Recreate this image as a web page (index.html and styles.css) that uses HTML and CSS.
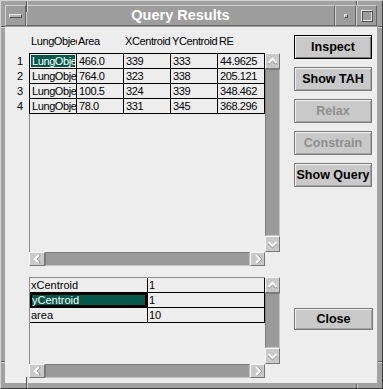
FILE: index.html
```html
<!DOCTYPE html>
<html>
<head>
  <meta charset="UTF-8">
  <title>Query Results</title>
  <link rel="stylesheet" href="styles.css">
</head>
<body>
  <div class="window">
    <!-- resize notches in the frame -->
    <span class="notch v top left"></span>
    <span class="notch v top right"></span>
    <span class="notch v bottom left"></span>
    <span class="notch v bottom right"></span>
    <span class="notch h side-l upper"></span>
    <span class="notch h side-l lower"></span>
    <span class="notch h side-r upper"></span>
    <span class="notch h side-r lower"></span>

    <div class="titlebar">
      <div class="tb-btn"><span class="dash"></span></div>
      <div class="title">Query Results</div>
      <div class="tb-btn"><span class="dot"></span></div>
      <div class="tb-btn"><span class="box"></span></div>
    </div>

    <div class="client">
      <div class="left">
        <div class="col-head">
          <div class="hcell">LungObject</div>
          <div class="hcell">Area</div>
          <div class="hcell">XCentroid</div>
          <div class="hcell">YCentroid</div>
          <div class="hcell">RE</div>
        </div>

        <div class="results">
          <div class="rownums">
            <div>1</div>
            <div>2</div>
            <div>3</div>
            <div>4</div>
          </div>
          <div class="panel panel-main">
            <div class="data">
              <div class="grid grid-main">
                <div class="cell selected">LungObject</div><div class="cell">466.0</div><div class="cell">339</div><div class="cell">333</div><div class="cell">44.9625</div>
                <div class="cell">LungObject</div><div class="cell">764.0</div><div class="cell">323</div><div class="cell">338</div><div class="cell">205.121</div>
                <div class="cell">LungObject</div><div class="cell">100.5</div><div class="cell">324</div><div class="cell">339</div><div class="cell">348.462</div>
                <div class="cell">LungObject</div><div class="cell">78.0</div><div class="cell">331</div><div class="cell">345</div><div class="cell">368.296</div>
              </div>
            </div>
            <div class="vscroll">
              <div class="sb-btn up"><svg width="13" height="14" viewBox="0 0 13 14"><polyline points="2.5,9 6.5,5 10.5,9" fill="none" stroke="#8a8a8a" stroke-width="2" transform="translate(0,1)"/><polyline points="2.5,9 6.5,5 10.5,9" fill="none" stroke="#fff" stroke-width="2"/></svg></div>
              <div class="trough"></div>
              <div class="sb-btn down"><svg width="13" height="14" viewBox="0 0 13 14"><polyline points="2.5,5 6.5,9 10.5,5" fill="none" stroke="#8a8a8a" stroke-width="2" transform="translate(0,1)"/><polyline points="2.5,5 6.5,9 10.5,5" fill="none" stroke="#fff" stroke-width="2"/></svg></div>
            </div>
            <div class="hscroll">
              <div class="sb-btn lt"><svg width="14" height="12" viewBox="0 0 14 12"><polyline points="9,2 5,6 9,10" fill="none" stroke="#8a8a8a" stroke-width="2" transform="translate(1,0)"/><polyline points="9,2 5,6 9,10" fill="none" stroke="#fff" stroke-width="2"/></svg></div>
              <div class="trough"></div>
              <div class="sb-btn rt"><svg width="13" height="12" viewBox="0 0 13 12"><polyline points="5,2 9,6 5,10" fill="none" stroke="#8a8a8a" stroke-width="2" transform="translate(1,0)"/><polyline points="5,2 9,6 5,10" fill="none" stroke="#fff" stroke-width="2"/></svg></div>
            </div>
          </div>
        </div>

        <div class="panel panel-props">
          <div class="data">
            <div class="grid grid-props">
              <div class="cell">xCentroid</div><div class="cell">1</div>
              <div class="cell selected framed">yCentroid</div><div class="cell">1</div>
              <div class="cell">area</div><div class="cell">10</div>
            </div>
          </div>
          <div class="vscroll">
            <div class="sb-btn up"><svg width="13" height="14" viewBox="0 0 13 14"><polyline points="2.5,9 6.5,5 10.5,9" fill="none" stroke="#8a8a8a" stroke-width="2" transform="translate(0,1)"/><polyline points="2.5,9 6.5,5 10.5,9" fill="none" stroke="#fff" stroke-width="2"/></svg></div>
            <div class="trough"></div>
            <div class="sb-btn down"><svg width="13" height="14" viewBox="0 0 13 14"><polyline points="2.5,5 6.5,9 10.5,5" fill="none" stroke="#8a8a8a" stroke-width="2" transform="translate(0,1)"/><polyline points="2.5,5 6.5,9 10.5,5" fill="none" stroke="#fff" stroke-width="2"/></svg></div>
          </div>
          <div class="hscroll">
            <div class="sb-btn lt"><svg width="14" height="12" viewBox="0 0 14 12"><polyline points="9,2 5,6 9,10" fill="none" stroke="#8a8a8a" stroke-width="2" transform="translate(1,0)"/><polyline points="9,2 5,6 9,10" fill="none" stroke="#fff" stroke-width="2"/></svg></div>
            <div class="trough"></div>
            <div class="sb-btn rt"><svg width="13" height="12" viewBox="0 0 13 12"><polyline points="5,2 9,6 5,10" fill="none" stroke="#8a8a8a" stroke-width="2" transform="translate(1,0)"/><polyline points="5,2 9,6 5,10" fill="none" stroke="#fff" stroke-width="2"/></svg></div>
          </div>
        </div>
      </div>

      <div class="actions">
        <button class="btn default">Inspect</button>
        <button class="btn">Show TAH</button>
        <button class="btn" disabled>Relax</button>
        <button class="btn" disabled>Constrain</button>
        <button class="btn">Show Query</button>
        <button class="btn close">Close</button>
      </div>
    </div>
  </div>
</body>
</html>
```

FILE: styles.css
```css
html, body {
  margin: 0;
  padding: 0;
  background: #a1a1a1;
}
body {
  font-family: 'Liberation Sans', Arial, sans-serif;
  font-size: 11px;
  color: #000;
}
.window {
  position: relative;
  width: 383px;
  height: 389px;
  box-sizing: border-box;
  display: flex;
  flex-direction: column;
  background: #a1a1a1;
  border: 1px solid;
  border-color: #d4d4d4 #3c3c3c #3c3c3c #d4d4d4;
  padding: 4px 5px 5px 4px;
}

/* frame notches */
.notch {
  position: absolute;
}
.notch.v {
  width: 1px;
  height: 4px;
  border-left: 1px solid #5a5a5a;
  background: #d8d8d8;
}
.notch.v.top { top: 0; }
.notch.v.bottom { bottom: 0; }
.notch.v.left { left: 25px; }
.notch.v.right { left: 355px; }
.notch.h {
  width: 4px;
  height: 1px;
  border-top: 1px solid #5a5a5a;
  background: #d8d8d8;
}
.notch.h.side-l { left: 0; }
.notch.h.side-r { right: 0; }
.notch.h.upper { top: 25px; }
.notch.h.lower { top: 360px; }

/* title bar */
.titlebar {
  display: flex;
  height: 21px;
  margin-bottom: 1px;
  background: #9d9d9d;
}
.tb-btn, .title {
  box-sizing: border-box;
  border: 1px solid;
  border-color: #d0d0d0 #646464 #646464 #d0d0d0;
}
.tb-btn {
  width: 21px;
  display: flex;
  align-items: center;
  justify-content: center;
}
.title {
  flex: 1;
  text-align: center;
  color: #fff;
  font-weight: bold;
  font-size: 14.5px;
  line-height: 19px;
}
.dash {
  width: 11px;
  height: 2px;
  border: 1px solid;
  border-color: #e6e6e6 #505050 #505050 #e6e6e6;
  background: #b4b4b4;
}
.dot {
  width: 2px;
  height: 2px;
  border: 1px solid;
  border-color: #e6e6e6 #505050 #505050 #e6e6e6;
  background: #b4b4b4;
}
.box {
  width: 10px;
  height: 10px;
  border: 1px solid;
  border-color: #e6e6e6 #505050 #505050 #e6e6e6;
  box-shadow: inset 1px 1px 0 #505050, inset -1px -1px 0 #e6e6e6;
}

/* client area */
.client {
  flex: 1;
  display: flex;
  background: #ededed;
}
.left {
  width: 275px;
  padding-top: 7px;
}
.col-head {
  display: grid;
  grid-template-columns: repeat(5, 47px);
  margin-left: 25px;
  height: 15px;
  line-height: 15px;
  margin-bottom: 4px;
  letter-spacing: -0.4px;
}
.hcell {
  padding-left: 1px;
  overflow: hidden;
  white-space: nowrap;
}
.results {
  display: flex;
}
.rownums {
  width: 24px;
  box-sizing: border-box;
  padding-top: 1px;
  padding-right: 6px;
  text-align: right;
}
.rownums div {
  height: 15px;
  line-height: 14px;
}

/* scrolled panels */
.panel {
  display: grid;
  grid-template-columns: 236px 15px;
}
.panel-main {
  grid-template-rows: 199px 14px;
}
.panel-props {
  grid-template-rows: 87px 14px;
  margin-left: 24px;
  margin-top: 11px;
}
.data {
  overflow: hidden;
  box-shadow: inset 1px 0 0 #8c8c8c;
}
.panel-props .data {
  box-shadow: inset 1px 1px 0 #8c8c8c;
}
.grid {
  display: grid;
}
.grid-main {
  grid-template-columns: repeat(5, 47px);
  border-top: 1px solid #000;
  border-left: 1px solid #000;
  letter-spacing: -0.4px;
}
.grid-props {
  grid-template-columns: 118px 117px;
  margin: 1px 0 0 1px;
}
.cell {
  box-sizing: border-box;
  height: 15px;
  line-height: 14px;
  padding-left: 2px;
  border-right: 1px solid #000;
  border-bottom: 1px solid #000;
  overflow: hidden;
  white-space: nowrap;
}
.grid-props .cell {
  padding-left: 1px;
}
.cell.selected {
  background: #07584a;
  color: #fff;
  box-shadow: inset 0 0 0 1px #ededed;
}
.cell.framed {
  box-shadow: inset 0 0 0 2px #000;
  padding-left: 2px;
}

.vscroll {
  display: flex;
  flex-direction: column;
}
.hscroll {
  display: flex;
}
.trough {
  flex: 1;
  background: #9a9a9a;
  box-sizing: border-box;
  border: 1px solid;
  border-color: #7c7c7c #c4c4c4 #c4c4c4 #7c7c7c;
}
.sb-btn {
  box-sizing: border-box;
  background: #c9c9c9;
  border: 1px solid;
  border-color: #f6f6f6 #777 #777 #f6f6f6;
  display: flex;
  align-items: center;
  justify-content: center;
}
.sb-btn svg {
  display: block;
}
.vscroll .sb-btn {
  height: 16px;
}
.hscroll .sb-btn.lt {
  width: 16px;
}
.hscroll .sb-btn.rt {
  width: 15px;
}

/* buttons */
.actions {
  display: flex;
  flex-direction: column;
  width: 78px;
  margin-left: 14px;
  padding-top: 8px;
}
.btn {
  height: 24px;
  margin: 0 0 8px 0;
  padding: 0;
  box-sizing: border-box;
  background: #c9c9c9;
  border: 1px solid #7a7a7a;
  box-shadow: inset 1px 1px 0 #f2f2f2, inset -1px -1px 0 #a4a4a4;
  font-family: 'Liberation Sans', Arial, sans-serif;
  font-weight: bold;
  font-size: 12.5px;
  color: #000;
  white-space: nowrap;
}
.btn.default {
  border-color: #000;
  box-shadow: inset 1px 1px 0 #f2f2f2, inset -1px -1px 0 #7a7a7a;
}
.btn:disabled {
  color: #8e8e8e;
}
.btn.close {
  height: 22px;
  margin-top: 113px;
  width: 79px;
}
```
